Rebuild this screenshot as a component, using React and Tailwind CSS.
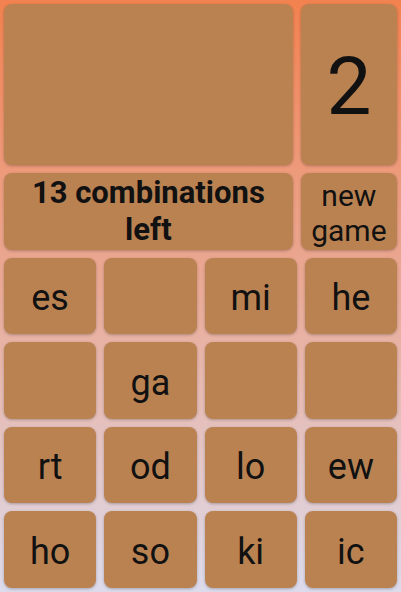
const tiles = ["es", "", "mi", "he", "", "ga", "", "", "rt", "od", "lo", "ew", "ho", "so", "ki", "ic"];

const tileClass =
  "flex items-center justify-center rounded-lg bg-[#bb8251] text-[#111] shadow-[0_1px_3px_rgba(0,0,0,0.25)]";

export default function App() {
  return (
    <div
      className="grid h-screen grid-cols-4 grid-rows-[repeat(7,minmax(0,1fr))] gap-2 bg-gradient-to-b from-[#f2824f] via-[#e9ab98] to-[#dcdbec] p-1"
      style={{ fontFamily: "Roboto, 'Noto Sans', sans-serif" }}
    >
      <div className="col-span-4 row-span-3 grid grid-cols-[3fr_1fr] grid-rows-subgrid gap-x-2">
        <div className={`${tileClass} row-span-2`} />
        <div className={`${tileClass} row-span-2 pt-1 text-[80px] leading-none`}>2</div>
        <button className={`${tileClass} text-center text-[31px] font-bold leading-[37px]`}>
          13 combinations
          <br />
          left
        </button>
        <button className={`${tileClass} pt-1 text-center text-3xl leading-[35px]`}>
          new
          <br />
          game
        </button>
      </div>
      {tiles.map((t, i) => (
        <button key={i} className={`${tileClass} pt-1 text-4xl`}>
          {t}
        </button>
      ))}
    </div>
  );
}
